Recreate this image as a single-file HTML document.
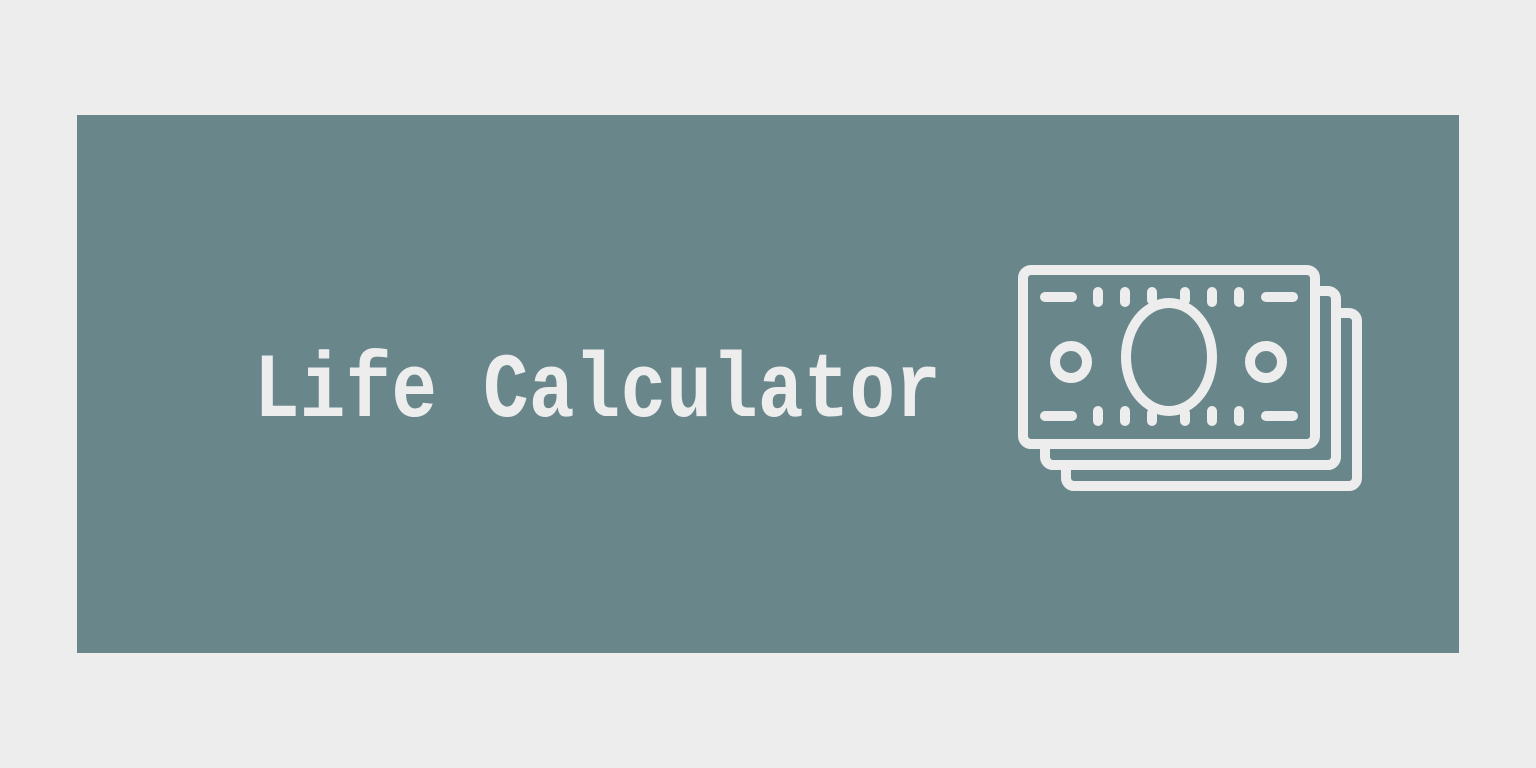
<!DOCTYPE html>
<html><head><meta charset="utf-8"><style>
html,body{margin:0;padding:0;width:1536px;height:768px;background:#ededed;overflow:hidden}
.panel{position:absolute;left:77px;top:115px;width:1382px;height:538px;background:#69868b}
.t{position:absolute;left:254px;top:346px;font-family:"Liberation Mono",monospace;font-weight:bold;font-size:76px;color:#ededed;white-space:nowrap;transform:scaleY(1.21);transform-origin:0 0;letter-spacing:0.2px;line-height:76px}
svg{position:absolute;left:0;top:0}
</style></head><body>
<div class="panel"></div>
<div class="t">Life Calculator</div>
<svg width="1536" height="768" fill="none" stroke="#ededed" stroke-width="10" stroke-linecap="round">
<rect x="1023" y="270" width="292" height="174" rx="8"/>
<path d="M1315 291 H1328 a8 8 0 0 1 8 8 V457 a8 8 0 0 1 -8 8 H1053 a8 8 0 0 1 -8 -8 V444"/>
<path d="M1336 313 H1349 a8 8 0 0 1 8 8 V478 a8 8 0 0 1 -8 8 H1074 a8 8 0 0 1 -8 -8 V465"/>
<ellipse cx="1169" cy="357" rx="43" ry="54"/>
<circle cx="1071" cy="362" r="16"/>
<circle cx="1266" cy="362" r="16"/>
<path d="M1045 297 H1072 M1266 297 H1293 M1045 416 H1072 M1266 416 H1293"/>
<path d="M1098 292 V302 M1125 292 V302 M1212 292 V302 M1239 292 V302 M1152 292 V300 M1185 292 V300"/>
<path d="M1098 411 V421 M1125 411 V421 M1212 411 V421 M1239 411 V421 M1152 413 V421 M1185 413 V421"/>
</svg>
</body></html>
